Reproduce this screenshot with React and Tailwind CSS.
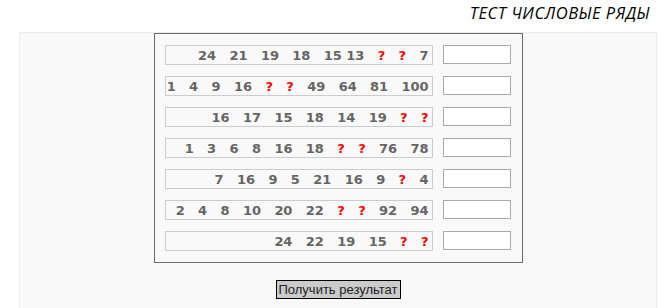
import React from "react";

const rows = [
  "24   21   19   18   15 13   ?   ?   7",
  "1   4   9   16   ?   ?   49   64   81   100",
  "16   17   15   18   14   19   ?   ?",
  "1   3   6   8   16   18   ?   ?   76   78",
  "7   16   9   5   21   16   9   ?   4",
  "2   4   8   10   20   22   ?   ?   92   94",
  "24   22   19   15   ?   ?",
];

const Sequence = ({ text }) => {
  const parts = text.split(/(\?)/);
  return (
    <div className="w-[268px] h-[20px] border border-[#cccccc] flex items-center justify-end pr-[3px] whitespace-pre text-[13px] leading-none font-bold tracking-[-0.05px] text-[#656565] font-['DejaVu_Sans',sans-serif]">
      {parts.map((p, i) =>
        p === "?" ? (
          <span key={i} className="text-[#ff0000]">
            ?
          </span>
        ) : (
          <span key={i}>{p}</span>
        )
      )}
    </div>
  );
};

export default function App() {
  return (
    <div className="w-[669px] h-[308px] bg-white overflow-hidden">
      <div className="h-[32px] flex items-start justify-end pr-[19px] pt-[3px]">
        <span className="italic text-[16.5px] leading-[20px] text-black font-['Open_Sans',sans-serif] tracking-[0.5px]">
          ТЕСТ ЧИСЛОВЫЕ РЯДЫ
        </span>
      </div>
      <div className="ml-[19px] w-[638px] h-[276px] bg-[#f9f9f9] border-l border-t border-r border-[#ececec] flex flex-col items-center">
        <div className="border border-[#6b6b6b] pl-[10px] pr-[11px] py-[11px] flex flex-col gap-[11px]">
          {rows.map((r, i) => (
            <div key={i} className="flex items-start gap-[10px]">
              <Sequence text={r} />
              <input
                type="text"
                className="w-[68px] h-[19px] bg-white border border-[#a9a9a9] outline-none"
              />
            </div>
          ))}
        </div>
        <button className="mt-[17px] h-[19px] px-[2px] bg-[#cbcbcb] border border-black text-[13px] leading-none text-[#222] font-['Liberation_Sans',Arial,sans-serif]">
          Получить результат
        </button>
      </div>
    </div>
  );
}
